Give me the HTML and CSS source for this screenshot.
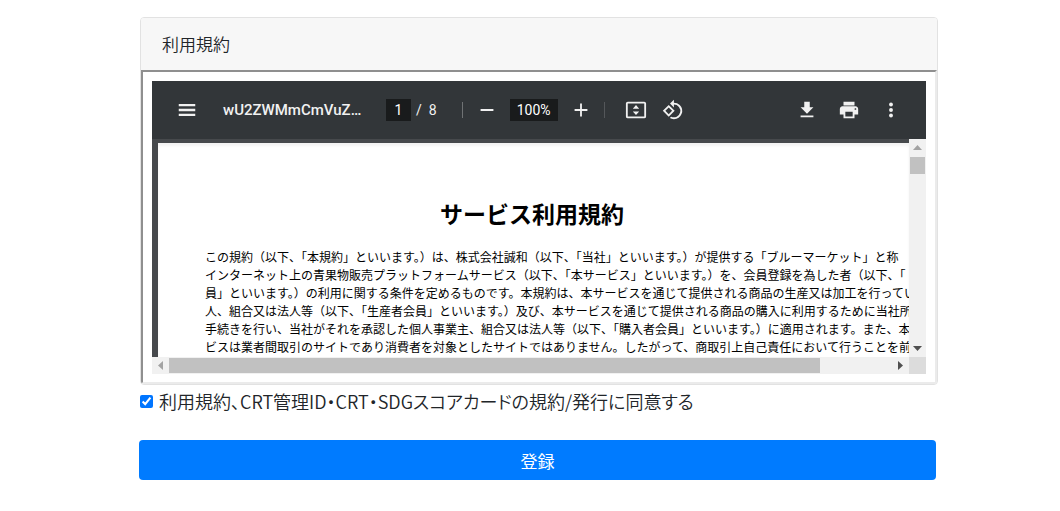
FILE: index.html
```html
<!DOCTYPE html>
<html lang="ja">
<head>
<meta charset="utf-8">
<meta name="viewport" content="width=device-width, initial-scale=1">
<title>利用規約</title>
<link rel="stylesheet" href="styles.css">
</head>
<body>
<main class="page">
  <form class="form">
    <section class="card">
      <h2 class="card-header">利用規約</h2>
      <div class="frame">
        <div class="viewer">
          <div class="toolbar">
            <button type="button" class="icon-button" aria-label="メニュー"><svg viewBox="0 0 24 24"><path d="M3 18.500h18V16H3v2.500zm0-5.250h18v-2.500H3v2.500zM3 5.500V8h18V5.500H3z"/></svg></button>
            <span class="file-name">wU2ZWMmCmVuZ…</span>
            <div class="pages">
              <input class="page-input" type="text" value="1" aria-label="ページ番号">
              <span>/</span>
              <span class="page-count">8</span>
            </div>
            <span class="divider"></span>
            <div class="zoom">
              <button type="button" class="icon-button" aria-label="縮小"><svg viewBox="0 0 24 24"><path d="M5 11h14v2H5z"/></svg></button>
              <input class="zoom-input" type="text" value="100%" aria-label="ズーム">
              <button type="button" class="icon-button" aria-label="拡大"><svg viewBox="0 0 24 24"><path d="M19 13h-6v6h-2v-6H5v-2h6V5h2v6h6v2z"/></svg></button>
            </div>
            <span class="divider dim"></span>
            <div class="view-tools">
              <button type="button" class="icon-button" aria-label="ページに合わせる"><svg viewBox="0 0 24 24"><path fill-rule="evenodd" d="M3 3h18a2 2 0 0 1 2 2v14a2 2 0 0 1-2 2H3a2 2 0 0 1-2-2V5a2 2 0 0 1 2-2zm0 2v14h18V5H3zm9 1.500 3.500 4h-7zm0 11-3.500-4h7z"/></svg></button>
              <button type="button" class="icon-button" aria-label="回転"><svg viewBox="0 0 24 24"><path fill-rule="evenodd" d="M7.340 6.410.860 12.900l6.490 6.480 6.490-6.480-6.500-6.490zM3.690 12.900l3.660-3.660L11 12.900l-3.660 3.660-3.650-3.660zM19.360 6.640A8.950 8.950 0 0 0 13 4V.760L8.760 5 13 9.240V6a7 7 0 1 1-3.030 13.310l-1.490 1.490A8.980 8.980 0 0 0 13 22a9 9 0 0 0 6.360-15.360z"/></svg></button>
            </div>
            <div class="actions">
              <button type="button" class="icon-button" aria-label="ダウンロード"><svg viewBox="0 0 24 24"><path d="M19 9h-4V3H9v6H5l7 7 7-7zM5 18v2h14v-2H5z"/></svg></button>
              <button type="button" class="icon-button" aria-label="印刷"><svg viewBox="0 0 24 24"><path d="M19 8H5c-1.660 0-3 1.340-3 3v6h4v4h12v-4h4v-6c0-1.660-1.340-3-3-3zm-3 11H8v-5h8v5zm3-7c-.550 0-1-.450-1-1s.450-1 1-1 1 .450 1 1-.450 1-1 1zm-1-9H6v4h12V3z"/></svg></button>
              <button type="button" class="icon-button" aria-label="その他"><svg viewBox="0 0 24 24"><circle cx="12" cy="6" r="2.100"/><circle cx="12" cy="12" r="2.100"/><circle cx="12" cy="18" r="2.100"/></svg></button>
            </div>
          </div>
          <div class="viewport">
            <article class="sheet">
              <h1 class="sheet-title">サービス利用規約</h1>
              <p class="sheet-text">この規約（以下、「本規約」といいます。）は、株式会社誠和（以下、「当社」といいます。）が提供する「ブルーマーケット」と称<br>インターネット上の青果物販売プラットフォームサービス（以下、「本サービス」といいます。）を、会員登録を為した者（以下、「<br>員」といいます。）の利用に関する条件を定めるものです。本規約は、本サービスを通じて提供される商品の生産又は加工を行ってい<br>人、組合又は法人等（以下、「生産者会員」といいます。）及び、本サービスを通じて提供される商品の購入に利用するために当社所<br>手続きを行い、当社がそれを承認した個人事業主、組合又は法人等（以下、「購入者会員」といいます。）に適用されます。また、本<br>ビスは業者間取引のサイトであり消費者を対象としたサイトではありません。したがって、商取引上自己責任において行うことを前提</p>
            </article>
            <div class="scroll-y" aria-hidden="true">
              <svg class="arrow" viewBox="0 0 17 17"><path fill="#a3a3a3" d="M4 11h9L8.500 6z"/></svg>
              <span class="thumb-y"></span>
              <svg class="arrow" viewBox="0 0 17 17"><path fill="#505050" d="M4 6h9l-4.500 5z"/></svg>
            </div>
            <div class="scroll-x" aria-hidden="true">
              <svg class="arrow" viewBox="0 0 17 17"><path fill="#a3a3a3" d="M11 4v9L6 8.500z"/></svg>
              <span class="track-x"><span class="thumb-x"></span></span>
              <svg class="arrow" viewBox="0 0 17 17"><path fill="#505050" d="M6 4v9l5-4.500z"/></svg>
            </div>
            <span class="corner"></span>
          </div>
        </div>
      </div>
    </section>
    <div class="agree">
      <input type="checkbox" id="agree" class="agree-box" checked>
      <label for="agree">利用規約、CRT管理ID・CRT・SDGスコアカードの規約/発行に同意する</label>
    </div>
    <button type="submit" class="submit">登録</button>
  </form>
</main>
</body>
</html>
```
FILE: styles.css
```css
* { box-sizing: border-box; }

body {
  margin: 0;
  background: #fff;
  color: #212529;
  font-family: "Noto Sans CJK JP", sans-serif;
  font-size: 17px;
  line-height: 26px;
}

button, input { font-family: inherit; margin: 0; }

.page { padding: 17px 122px 30px 139px; }

.form { display: flex; flex-direction: column; }

.card {
  margin-left: 1px;
  border: 1px solid #e2e2e2;
  border-radius: 4px;
  overflow: hidden;
}

.card-header {
  margin: 0;
  padding: 13px 21px;
  background: #f7f7f7;
  font-size: 17px;
  font-weight: 350;
}

.frame {
  padding: 9px 9px 8px;
  border: 2px solid;
  border-color: #8f8f8f #ebebeb #ebebeb #8f8f8f;
}

.viewer { background: #46494c; }

.toolbar {
  display: flex;
  align-items: center;
  height: 58px;
  padding: 0 24px;
  background: #323639;
  color: #f1f1f1;
  font-family: Roboto, sans-serif;
  font-size: 14px;
}

.icon-button {
  display: flex;
  padding: 0;
  border: 0;
  background: none;
  color: #f1f1f1;
}

.icon-button svg {
  width: 22px;
  height: 22px;
  fill: currentColor;
}

.file-name {
  width: 138px;
  margin: 0 25px;
  font-size: 15px;
  font-weight: 500;
  white-space: nowrap;
}

.pages { display: flex; align-items: center; gap: 5px; }
.page-count { margin-left: 2px; }

.page-input, .zoom-input {
  height: 22px;
  padding: 0;
  border: 0;
  background: #191b1c;
  color: #fff;
  font-family: Roboto, sans-serif;
  font-size: 14px;
  text-align: center;
}

.page-input { width: 25px; }
.zoom-input { width: 48px; }

.divider {
  width: 1px;
  height: 16px;
  margin: 0 13px 0 25px;
  background: #6f7274;
}

.zoom { display: flex; align-items: center; gap: 12px; }
.divider.dim { margin: 0 20px 0 12px; background: #54575a; }
.view-tools { display: flex; gap: 15px; }
.actions { display: flex; gap: 20px; margin-left: auto; }

.viewport {
  display: grid;
  grid-template-columns: minmax(0, 1fr) 17px;
  grid-template-rows: 218px 17px;
}

.sheet {
  margin: 4px 0 0 6px;
  padding: 53px 0 0 47px;
  overflow: hidden;
  background: #fff;
  color: #000;
  box-shadow: inset 0 3px 3px #f3f3f3;
  white-space: nowrap;
}

.sheet-title {
  margin: 0 0 18px 235px;
  font-size: 23px;
  font-weight: 700;
  line-height: 34px;
}

.sheet-text {
  margin: 0;
  font-size: 12px;
  line-height: 18px;
}

.scroll-y {
  display: flex;
  flex-direction: column;
  background: #f1f1f1;
}

.arrow { flex: none; width: 17px; height: 17px; }
.scroll-y .arrow:last-child { margin-top: auto; }
.thumb-y { height: 17px; margin: 1px 1px 0; background: #c1c1c1; }
.scroll-x { display: flex; background: #f1f1f1; }
.track-x { flex: 1; padding: 1px 0; }
.thumb-x { display: block; width: 90%; height: 15px; background: #c1c1c1; }
.corner { background: #dcdcdc; }

.agree {
  display: flex;
  align-items: center;
  gap: 6px;
  padding: 3px 0 26px 1px;
  font-size: 18px;
  font-feature-settings: "palt";
  font-weight: 350;
}

.agree-box { width: 13px; height: 13px; accent-color: #0075ff; }

.submit {
  height: 40px;
  margin-right: 2px;
  border: 0;
  border-radius: 4px;
  background: #007bff;
  color: #fff;
  font-size: 17px;
}
```
